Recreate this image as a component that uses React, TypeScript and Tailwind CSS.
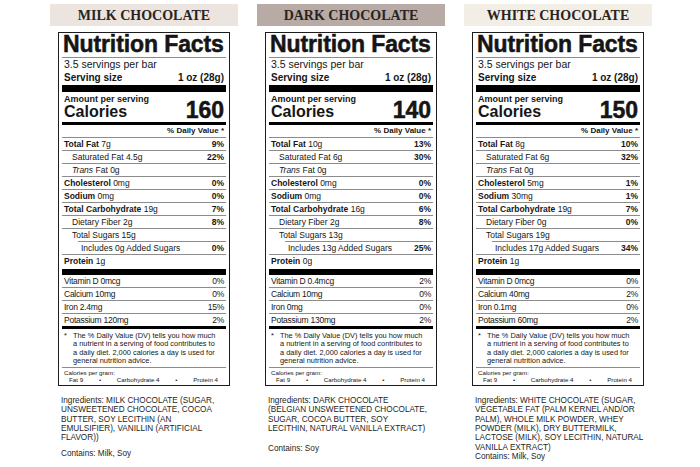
import React from "react";

type Row = {
  name: string;
  amount: string;
  dv?: string;
  bold?: boolean;
  indent?: 0 | 1 | 2;
  italic?: string;
  lineIndent?: boolean;
};

type Label = {
  title: string;
  headerBg: string;
  calories: string;
  rows: Row[];
  protein: string;
  vitamins: [string, string][];
  ingredients: string[];
  contains: string;
  containsGap: string;
};

const LABELS: Label[] = [
  {
    title: "MILK CHOCOLATE",
    headerBg: "bg-[#ece4de]",
    calories: "160",
    rows: [
      { name: "Total Fat", amount: "7g", dv: "9%", bold: true },
      { name: "Saturated Fat", amount: "4.5g", dv: "22%", indent: 1 },
      { name: "Fat", amount: "0g", italic: "Trans", indent: 1 },
      { name: "Cholesterol", amount: "0mg", dv: "0%", bold: true },
      { name: "Sodium", amount: "0mg", dv: "0%", bold: true },
      { name: "Total Carbohydrate", amount: "19g", dv: "7%", bold: true },
      { name: "Dietary Fiber", amount: "2g", dv: "8%", indent: 1 },
      { name: "Total Sugars", amount: "15g", indent: 1, lineIndent: true },
      { name: "Includes 0g Added Sugars", amount: "", dv: "0%", indent: 2 },
    ],
    protein: "1g",
    vitamins: [
      ["Vitamin D 0mcg", "0%"],
      ["Calcium 10mg", "0%"],
      ["Iron 2.4mg", "15%"],
      ["Potassium 120mg", "2%"],
    ],
    ingredients: [
      "Ingredients: MILK CHOCOLATE (SUGAR,",
      "UNSWEETENED CHOCOLATE, COCOA",
      "BUTTER, SOY LECITHIN (AN",
      "EMULSIFIER), VANILLIN (ARTIFICIAL",
      "FLAVOR))",
    ],
    contains: "Contains: Milk, Soy",
    containsGap: "mt-[6px]",
  },
  {
    title: "DARK CHOCOLATE",
    headerBg: "bg-[#b8aba6]",
    calories: "140",
    rows: [
      { name: "Total Fat", amount: "10g", dv: "13%", bold: true },
      { name: "Saturated Fat", amount: "6g", dv: "30%", indent: 1 },
      { name: "Fat", amount: "0g", italic: "Trans", indent: 1 },
      { name: "Cholesterol", amount: "0mg", dv: "0%", bold: true },
      { name: "Sodium", amount: "0mg", dv: "0%", bold: true },
      { name: "Total Carbohydrate", amount: "16g", dv: "6%", bold: true },
      { name: "Dietary Fiber", amount: "2g", dv: "8%", indent: 1 },
      { name: "Total Sugars", amount: "13g", indent: 1, lineIndent: true },
      { name: "Includes 13g Added Sugars", amount: "", dv: "25%", indent: 2 },
    ],
    protein: "0g",
    vitamins: [
      ["Vitamin D 0.4mcg", "2%"],
      ["Calcium 10mg", "0%"],
      ["Iron 0mg", "0%"],
      ["Potassium 130mg", "2%"],
    ],
    ingredients: [
      "Ingredients: DARK CHOCOLATE",
      "(BELGIAN UNSWEETENED CHOCOLATE,",
      "SUGAR, COCOA BUTTER, SOY",
      "LECITHIN, NATURAL VANILLA EXTRACT)",
    ],
    contains: "Contains: Soy",
    containsGap: "mt-[11px]",
  },
  {
    title: "WHITE CHOCOLATE",
    headerBg: "bg-[#f2ede5]",
    calories: "150",
    rows: [
      { name: "Total Fat", amount: "8g", dv: "10%", bold: true },
      { name: "Saturated Fat", amount: "6g", dv: "32%", indent: 1 },
      { name: "Fat", amount: "0g", italic: "Trans", indent: 1 },
      { name: "Cholesterol", amount: "5mg", dv: "1%", bold: true },
      { name: "Sodium", amount: "30mg", dv: "1%", bold: true },
      { name: "Total Carbohydrate", amount: "19g", dv: "7%", bold: true },
      { name: "Dietary Fiber", amount: "0g", dv: "0%", indent: 1 },
      { name: "Total Sugars", amount: "19g", indent: 1, lineIndent: true },
      { name: "Includes 17g Added Sugars", amount: "", dv: "34%", indent: 2 },
    ],
    protein: "1g",
    vitamins: [
      ["Vitamin D 0mcg", "0%"],
      ["Calcium 40mg", "2%"],
      ["Iron 0.1mg", "0%"],
      ["Potassium 60mg", "2%"],
    ],
    ingredients: [
      "Ingredients: WHITE CHOCOLATE (SUGAR,",
      "VEGETABLE FAT (PALM KERNEL AND/OR",
      "PALM), WHOLE MILK POWDER, WHEY",
      "POWDER (MILK), DRY BUTTERMILK,",
      "LACTOSE (MILK), SOY LECITHIN, NATURAL",
      "VANILLA EXTRACT)",
    ],
    contains: "Contains: Milk, Soy",
    containsGap: "mt-0",
  },
];

function NutrientRow({ row }: { row: Row }) {
  const pad = row.indent === 2 ? "pl-[19px]" : row.indent === 1 ? "pl-[10px]" : "pl-[2px]";
  return (
    <>
      <div className={`flex h-[12px] items-center justify-between pr-[2px] text-[8.5px] leading-none ${pad}`}>
        <span className="whitespace-nowrap">
          {row.italic && <i>{row.italic} </i>}
          {row.bold ? <b>{row.name}</b> : row.name}
          {row.amount && ` ${row.amount}`}
        </span>
        {row.dv && <b>{row.dv}</b>}
      </div>
      <div className={`h-px bg-[#8c8c8c] ${row.lineIndent ? "ml-[16px]" : ""}`} />
    </>
  );
}

function NutritionLabel({ label }: { label: Label }) {
  return (
    <div className="ml-[8px] mt-[6px] w-[172px] border-[1.5px] border-[#1c1c1c] px-[3px] text-[#161616]">
      <div className="h-[24px] whitespace-nowrap px-[1px] text-[23px] font-bold leading-[23px] tracking-[-0.1px] [-webkit-text-stroke:0.5px_#111]">
        Nutrition Facts
      </div>
      <div className="h-px bg-[#8c8c8c]" />
      <div className="h-[13px] px-[2px] text-[10.5px] leading-[13px]">3.5 servings per bar</div>
      <div className="flex h-[13px] items-center justify-between px-[2px] text-[10px] font-bold leading-[13px]">
        <span>Serving size</span>
        <span>1 oz (28g)</span>
      </div>
      <div className="mt-[1px] h-[7px] bg-black" />
      <div className="mt-[2px] flex items-end justify-between px-[2px]">
        <div>
          <div className="h-[11px] text-[9px] font-bold leading-[11px]">Amount per serving</div>
          <div className="h-[14px] text-[16px] font-bold leading-[14px]">Calories</div>
        </div>
        <div className="text-[23px] font-bold leading-[18px] [-webkit-text-stroke:0.5px_#111]">{label.calories}</div>
      </div>
      <div className="mt-[3px] h-[3px] bg-black" />
      <div className="h-[12px] px-[2px] text-right text-[8px] font-bold leading-[12px]">% Daily Value *</div>
      <div className="h-px bg-[#8c8c8c]" />
      {label.rows.map((r) => (
        <NutrientRow key={r.name + r.amount} row={r} />
      ))}
      <div className="flex h-[13px] items-center px-[2px] text-[8.5px] leading-none">
        <b>Protein</b>&nbsp;{label.protein}
      </div>
      <div className="mt-[1px] h-[6px] bg-black" />
      {label.vitamins.map(([name, dv], i) => (
        <div key={name}>
          <div className="flex h-[12px] items-center justify-between px-[2px] text-[8.5px] leading-none tracking-[-0.25px]">
            <span>{name}</span>
            <span>{dv}</span>
          </div>
          {i < label.vitamins.length - 1 && <div className="h-px bg-[#8c8c8c]" />}
        </div>
      ))}
      <div className="h-[3px] bg-black" />
      <div className="flex px-[2px] pb-[2px] pt-[3px] text-[7.4px] leading-[8.3px]">
        <span className="w-[9px] shrink-0">*</span>
        <div className="whitespace-nowrap">
          The % Daily Value (DV) tells you how much
          <br />a nutrient in a serving of food contributes to
          <br />a daily diet. 2,000 calories a day is used for
          <br />general nutrition advice.
        </div>
      </div>
      <div className="h-px bg-[#8c8c8c]" />
      <div className="px-[2px] pb-[2px] pt-[1px] text-[6.2px] leading-[7px]">
        <div>Calories per gram:</div>
        <div className="flex justify-between pl-[5px] pr-[6px]">
          <span>Fat 9</span>
          <span>•</span>
          <span>Carbohydrate 4</span>
          <span>•</span>
          <span>Protein 4</span>
        </div>
      </div>
    </div>
  );
}

export default function App() {
  return (
    <div className="flex h-[467px] w-[700px] gap-[19px] overflow-hidden bg-white pl-[50px] pt-[4px] font-['Liberation_Sans',Arial,sans-serif]">
      {LABELS.map((label) => (
        <div key={label.title} className="flex w-[188px] flex-col">
          <div
            className={`flex h-[22px] items-center justify-center font-['Liberation_Serif','Times_New_Roman',serif] text-[14px] font-bold text-[#2a2421] ${label.headerBg}`}
          >
            {label.title}
          </div>
          <NutritionLabel label={label} />
          <div className="ml-[11px] mt-[10px] whitespace-nowrap text-[8.2px] leading-[9.3px] text-[#1e1e1e]">
            {label.ingredients.map((line) => (
              <div key={line}>{line}</div>
            ))}
            <div className={label.containsGap}>{label.contains}</div>
          </div>
        </div>
      ))}
    </div>
  );
}
